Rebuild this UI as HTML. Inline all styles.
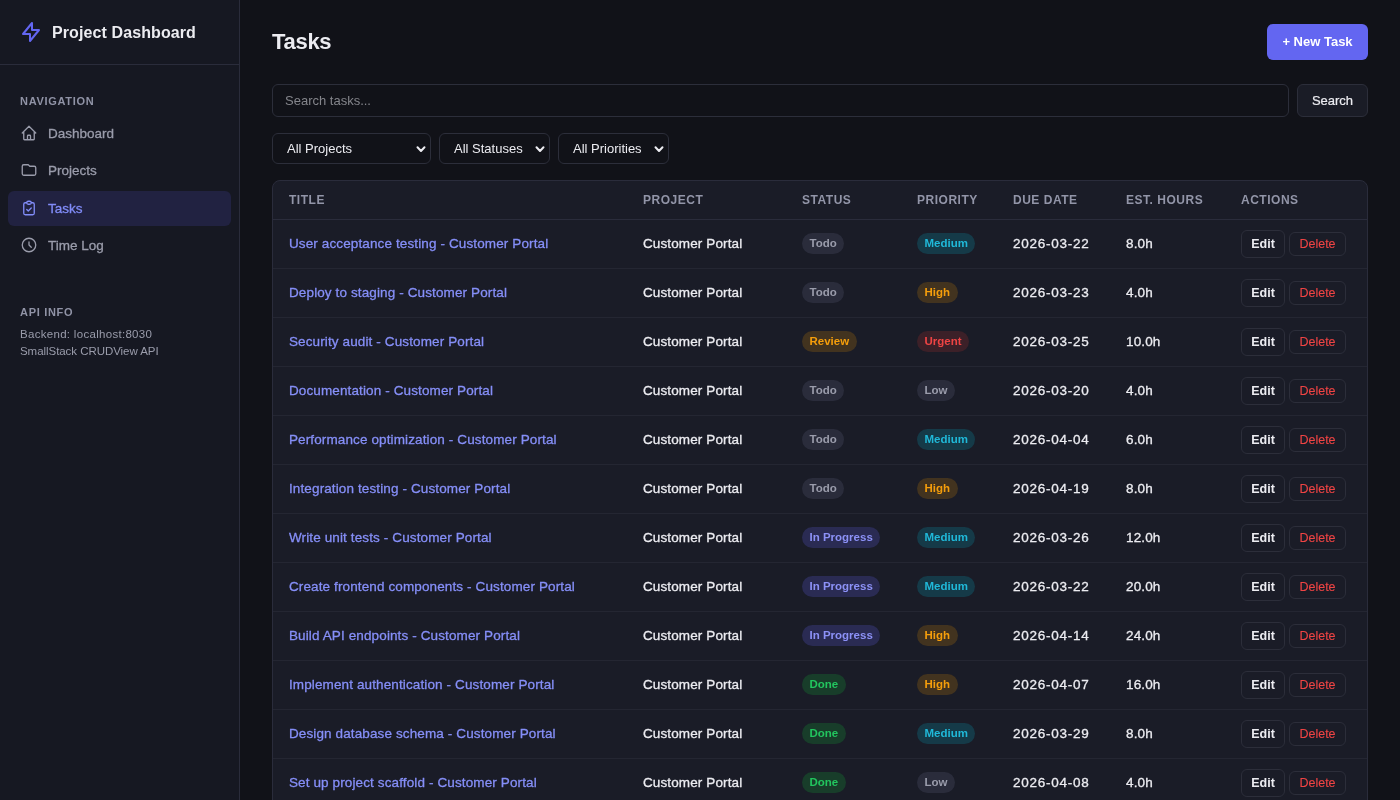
<!DOCTYPE html>
<html><head><meta charset="utf-8"><title>Tasks</title>
<style>
*{box-sizing:border-box;margin:0;padding:0}
html,body{-webkit-font-smoothing:antialiased;width:1400px;height:800px;overflow:hidden;background:#111218;font-family:"Liberation Sans",sans-serif;color:#e5e7eb}
.side{position:absolute;left:0;top:0;width:240px;height:800px;background:#161822;border-right:1px solid #2a2c3b}
.brand{position:absolute;left:0;top:0;width:239px;height:65px;border-bottom:1px solid #2a2c3b}
.brand svg{position:absolute;left:19px;top:19.5px}
.brand .t{position:absolute;left:52px;top:23.5px;font-size:16px;letter-spacing:0.1px;font-weight:bold;color:#ececf1;white-space:nowrap}
.sec{position:absolute;left:20px;font-size:11px;font-weight:bold;letter-spacing:0.7px;color:#9093a6}
.nav{position:absolute;left:8px;width:223px;height:35px;border-radius:6px}
.nav svg{position:absolute;left:12px;top:8px}
.nav span{position:absolute;left:40px;top:9.5px;font-size:13.5px;-webkit-text-stroke:0.3px currentColor;color:#9a9cab;white-space:nowrap}
.nav.act{background:#212241}
.nav.act span{color:#818cf8}
.info{position:absolute;left:20px;font-size:11.5px;letter-spacing:0.25px;color:#9a9cab;white-space:nowrap}
h1{position:absolute;left:272px;top:29px;font-size:22px;letter-spacing:-0.3px;font-weight:bold;color:#ececf1}
.newbtn{position:absolute;left:1267px;top:24px;width:101px;height:36px;border-radius:6px;background:#6366f1;color:#fff;font-size:13px;font-weight:bold;text-align:center;line-height:36px}
.search{position:absolute;left:272px;top:84px;width:1017px;height:33px;border:1px solid #2c2e3a;border-radius:6px;background:#111218}
.search span{position:absolute;left:12px;top:8px;font-size:13px;color:#84858b}
.sbtn{position:absolute;left:1297px;top:84px;width:71px;height:33px;border:1px solid #2c2e3a;border-radius:6px;background:#1a1c26;color:#ececf1;font-size:13px;-webkit-text-stroke:0.2px currentColor;text-align:center;line-height:32px}
.sel{position:absolute;top:133px;height:31px;border:1px solid #2c2e3a;border-radius:6px;background:#111218}
.sel span{position:absolute;left:14px;top:7px;font-size:13px;color:#ececf1;white-space:nowrap}
.sel svg{position:absolute;right:4px;top:11px}
.tbl{position:absolute;left:272px;top:180px;width:1096px;height:640px;border:1px solid #2a2c3b;border-radius:8px;background:#1a1c27;overflow:hidden}
table{border-collapse:collapse;width:1094px;table-layout:fixed}
th{height:38px;text-align:left;font-size:12px;font-weight:bold;letter-spacing:0.52px;color:#9295a8;padding-left:16px;border-bottom:1px solid #2a2c3b}
td{height:49px;padding-left:16px;font-size:13.5px;letter-spacing:0.12px;-webkit-text-stroke:0.3px currentColor;color:#ececf1;border-bottom:1px solid #242632;white-space:nowrap}
td a{color:#868ff8}
.b{display:inline-block;height:21px;line-height:21px;padding:0 7.5px;border-radius:11px;font-size:11.5px;font-weight:bold;letter-spacing:0;vertical-align:middle}
.todo{background:#2a2c3b;color:#9a9cab}
.low{background:#2a2c3b;color:#9a9cab}
.medium{background:#153a48;color:#20b8d8}
.high{background:#42331f;color:#f59e0b}
.urgent{background:#3c2028;color:#ef4444}
.review{background:#42331f;color:#f59e0b}
.prog{background:#2a2b53;color:#8c91f6}
.done{background:#183d2a;color:#22c55e}
.edit{display:inline-block;width:44px;height:28px;line-height:26px;border:1px solid #2c2e3a;border-radius:6px;text-align:center;font-size:12.5px;letter-spacing:0;font-weight:bold;color:#ececf1;vertical-align:middle}
.del{display:inline-block;margin-left:4px;width:57px;height:24px;line-height:22px;border:1px solid #2c2e3a;border-radius:6px;text-align:center;font-size:12.5px;letter-spacing:0;color:#ef4444;vertical-align:middle}
.c5{letter-spacing:0.75px}
.b,.edit{-webkit-text-stroke:0}
.del{-webkit-text-stroke:0.1px currentColor}
</style></head><body><div id="w" style="position:absolute;left:0;top:0;width:1400px;height:800px;overflow:hidden;will-change:transform">
<div class="side">
  <div class="brand">
    <svg width="24" height="24" viewBox="0 0 24 24" fill="none" stroke="#6366f1" stroke-width="2" stroke-linejoin="round" stroke-linecap="round"><path d="M13 10V3L4 14h7v7l9-11h-7z"/></svg>
    <div class="t">Project Dashboard</div>
  </div>
  <div class="sec" style="top:95px">NAVIGATION</div>
  <div class="nav" style="top:116px"><svg width="18" height="18" viewBox="0 0 24 24" fill="none" stroke="#9a9cab" stroke-width="1.75" stroke-linecap="round" stroke-linejoin="round"><path d="M3 12l2-2m0 0l7-7 7 7M5 10v10a1 1 0 001 1h3m10-11l2 2m-2-2v10a1 1 0 01-1 1h-3m-6 0a1 1 0 001-1v-4a1 1 0 011-1h2a1 1 0 011 1v4a1 1 0 001 1m-6 0h6"/></svg><span>Dashboard</span></div>
  <div class="nav" style="top:153px"><svg width="18" height="18" viewBox="0 0 24 24" fill="none" stroke="#9a9cab" stroke-width="1.75" stroke-linecap="round" stroke-linejoin="round"><path d="M3 7v10a2 2 0 002 2h14a2 2 0 002-2V9a2 2 0 00-2-2h-6l-2-2H5a2 2 0 00-2 2z"/></svg><span>Projects</span></div>
  <div class="nav act" style="top:191px"><svg width="18" height="18" viewBox="0 0 24 24" fill="none" stroke="#818cf8" stroke-width="1.75" stroke-linecap="round" stroke-linejoin="round"><path d="M9 5H7a2 2 0 00-2 2v12a2 2 0 002 2h10a2 2 0 002-2V7a2 2 0 00-2-2h-2M9 5a2 2 0 002 2h2a2 2 0 002-2M9 5a2 2 0 012-2h2a2 2 0 012 2m-6 9l2 2 4-4"/></svg><span>Tasks</span></div>
  <div class="nav" style="top:228px"><svg width="18" height="18" viewBox="0 0 24 24" fill="none" stroke="#9a9cab" stroke-width="1.75" stroke-linecap="round" stroke-linejoin="round"><path d="M12 8v4l3 3m6-3a9 9 0 11-18 0 9 9 0 0118 0z"/></svg><span>Time Log</span></div>
  <div class="sec" style="top:306px">API INFO</div>
  <div class="info" style="top:328px;letter-spacing:0.3px">Backend: localhost:8030</div>
  <div class="info" style="top:345px;letter-spacing:-0.05px">SmallStack CRUDView API</div>
</div>
<h1>Tasks</h1>
<div class="newbtn">+ New Task</div>
<div class="search"><span>Search tasks...</span></div>
<div class="sbtn">Search</div>
<div class="sel" style="left:272px;width:159px"><span>All Projects</span><svg width="10" height="10" viewBox="0 0 10 10" fill="none" stroke="#ececf1" stroke-width="2" stroke-linecap="round" stroke-linejoin="round"><path d="M1.5 2.25l3.5 3.75 3.5-3.75"/></svg></div>
<div class="sel" style="left:439px;width:111px"><span>All Statuses</span><svg width="10" height="10" viewBox="0 0 10 10" fill="none" stroke="#ececf1" stroke-width="2" stroke-linecap="round" stroke-linejoin="round"><path d="M1.5 2.25l3.5 3.75 3.5-3.75"/></svg></div>
<div class="sel" style="left:558px;width:111px"><span>All Priorities</span><svg width="10" height="10" viewBox="0 0 10 10" fill="none" stroke="#ececf1" stroke-width="2" stroke-linecap="round" stroke-linejoin="round"><path d="M1.5 2.25l3.5 3.75 3.5-3.75"/></svg></div>
<div class="tbl">
<table>
<colgroup><col style="width:354px"><col style="width:159px"><col style="width:115px"><col style="width:96px"><col style="width:113px"><col style="width:115px"><col style="width:142px"></colgroup>
<thead><tr><th>TITLE</th><th>PROJECT</th><th>STATUS</th><th>PRIORITY</th><th>DUE DATE</th><th>EST. HOURS</th><th>ACTIONS</th></tr></thead>
<tbody>
<tr><td class="c1"><a>User acceptance testing - Customer Portal</a></td><td class="c2">Customer Portal</td><td class="c3"><span class="b todo">Todo</span></td><td class="c4"><span class="b medium">Medium</span></td><td class="c5">2026-03-22</td><td class="c6">8.0h</td><td class="c7"><span class="edit">Edit</span><span class="del">Delete</span></td></tr>
<tr><td class="c1"><a>Deploy to staging - Customer Portal</a></td><td class="c2">Customer Portal</td><td class="c3"><span class="b todo">Todo</span></td><td class="c4"><span class="b high">High</span></td><td class="c5">2026-03-23</td><td class="c6">4.0h</td><td class="c7"><span class="edit">Edit</span><span class="del">Delete</span></td></tr>
<tr><td class="c1"><a>Security audit - Customer Portal</a></td><td class="c2">Customer Portal</td><td class="c3"><span class="b review">Review</span></td><td class="c4"><span class="b urgent">Urgent</span></td><td class="c5">2026-03-25</td><td class="c6">10.0h</td><td class="c7"><span class="edit">Edit</span><span class="del">Delete</span></td></tr>
<tr><td class="c1"><a>Documentation - Customer Portal</a></td><td class="c2">Customer Portal</td><td class="c3"><span class="b todo">Todo</span></td><td class="c4"><span class="b low">Low</span></td><td class="c5">2026-03-20</td><td class="c6">4.0h</td><td class="c7"><span class="edit">Edit</span><span class="del">Delete</span></td></tr>
<tr><td class="c1"><a>Performance optimization - Customer Portal</a></td><td class="c2">Customer Portal</td><td class="c3"><span class="b todo">Todo</span></td><td class="c4"><span class="b medium">Medium</span></td><td class="c5">2026-04-04</td><td class="c6">6.0h</td><td class="c7"><span class="edit">Edit</span><span class="del">Delete</span></td></tr>
<tr><td class="c1"><a>Integration testing - Customer Portal</a></td><td class="c2">Customer Portal</td><td class="c3"><span class="b todo">Todo</span></td><td class="c4"><span class="b high">High</span></td><td class="c5">2026-04-19</td><td class="c6">8.0h</td><td class="c7"><span class="edit">Edit</span><span class="del">Delete</span></td></tr>
<tr><td class="c1"><a>Write unit tests - Customer Portal</a></td><td class="c2">Customer Portal</td><td class="c3"><span class="b prog">In Progress</span></td><td class="c4"><span class="b medium">Medium</span></td><td class="c5">2026-03-26</td><td class="c6">12.0h</td><td class="c7"><span class="edit">Edit</span><span class="del">Delete</span></td></tr>
<tr><td class="c1"><a>Create frontend components - Customer Portal</a></td><td class="c2">Customer Portal</td><td class="c3"><span class="b prog">In Progress</span></td><td class="c4"><span class="b medium">Medium</span></td><td class="c5">2026-03-22</td><td class="c6">20.0h</td><td class="c7"><span class="edit">Edit</span><span class="del">Delete</span></td></tr>
<tr><td class="c1"><a>Build API endpoints - Customer Portal</a></td><td class="c2">Customer Portal</td><td class="c3"><span class="b prog">In Progress</span></td><td class="c4"><span class="b high">High</span></td><td class="c5">2026-04-14</td><td class="c6">24.0h</td><td class="c7"><span class="edit">Edit</span><span class="del">Delete</span></td></tr>
<tr><td class="c1"><a>Implement authentication - Customer Portal</a></td><td class="c2">Customer Portal</td><td class="c3"><span class="b done">Done</span></td><td class="c4"><span class="b high">High</span></td><td class="c5">2026-04-07</td><td class="c6">16.0h</td><td class="c7"><span class="edit">Edit</span><span class="del">Delete</span></td></tr>
<tr><td class="c1"><a>Design database schema - Customer Portal</a></td><td class="c2">Customer Portal</td><td class="c3"><span class="b done">Done</span></td><td class="c4"><span class="b medium">Medium</span></td><td class="c5">2026-03-29</td><td class="c6">8.0h</td><td class="c7"><span class="edit">Edit</span><span class="del">Delete</span></td></tr>
<tr><td class="c1"><a>Set up project scaffold - Customer Portal</a></td><td class="c2">Customer Portal</td><td class="c3"><span class="b done">Done</span></td><td class="c4"><span class="b low">Low</span></td><td class="c5">2026-04-08</td><td class="c6">4.0h</td><td class="c7"><span class="edit">Edit</span><span class="del">Delete</span></td></tr>
</tbody></table>
</div>
</div></body></html>
